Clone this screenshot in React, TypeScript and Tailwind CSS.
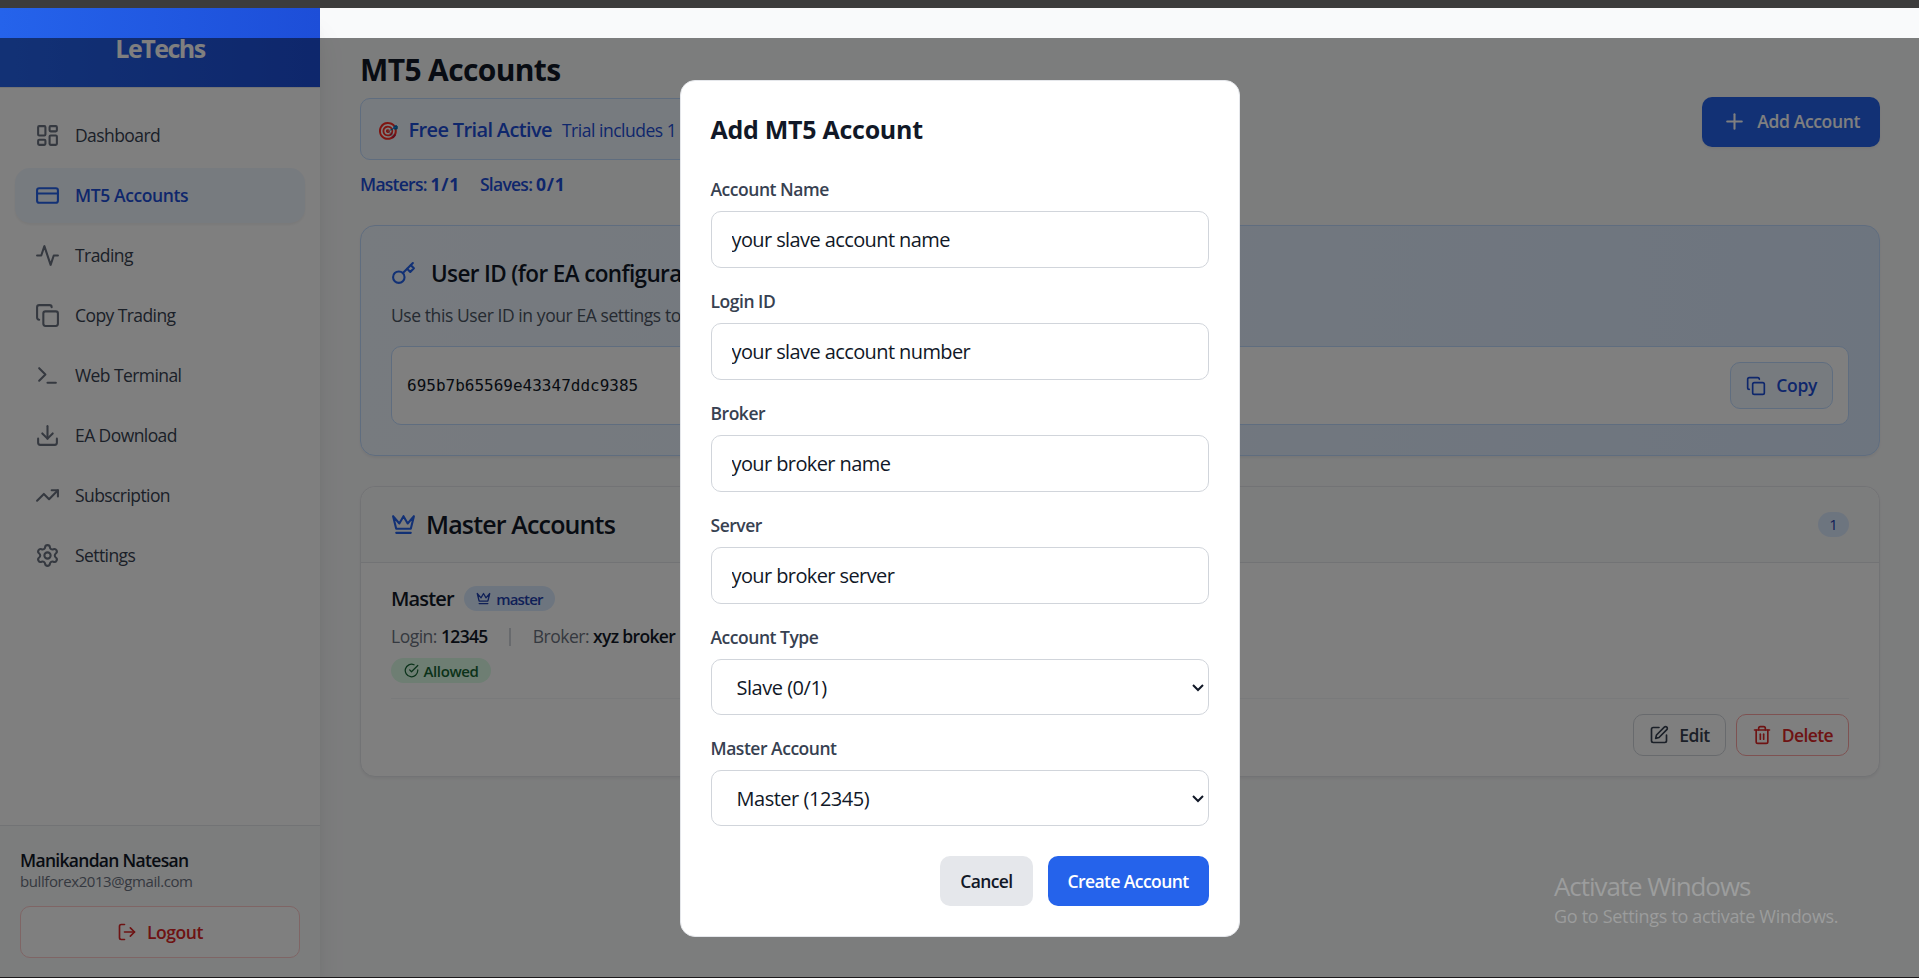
import React from 'react';
import {
  LayoutDashboard,
  CreditCard,
  Copy,
  Download,
  TrendingUp,
  Settings,
  LogOut,
  Plus,
  Trash2,
} from 'lucide-react';

type IconProps = { className?: string };

function Svg({ className, children }: IconProps & { children: React.ReactNode }) {
  return (
    <svg
      viewBox="0 0 24 24"
      fill="none"
      stroke="currentColor"
      strokeWidth={2}
      strokeLinecap="round"
      strokeLinejoin="round"
      className={className}
    >
      {children}
    </svg>
  );
}

const ActivityIcon = ({ className }: IconProps) => (
  <Svg className={className}>
    <polyline points="22 12 18 12 15 21 9 3 6 12 2 12" />
  </Svg>
);

const TerminalIcon = ({ className }: IconProps) => (
  <Svg className={className}>
    <polyline points="4 17 10 11 4 5" />
    <line x1="12" x2="20" y1="19" y2="19" />
  </Svg>
);

const CrownIcon = ({ className }: IconProps) => (
  <Svg className={className}>
    <path d="m2 4 3 12h14l3-12-6 7-4-7-4 7-6-7zm3 16h14" />
  </Svg>
);

const KeyIcon = ({ className }: IconProps) => (
  <Svg className={className}>
    <circle cx="7.5" cy="15.5" r="5.5" />
    <path d="m21 2-9.6 9.6" />
    <path d="m15.5 7.5 3 3L22 7l-3-3" />
  </Svg>
);

const CheckIcon = ({ className }: IconProps) => (
  <Svg className={className}>
    <path d="M22 11.08V12a10 10 0 1 1-5.93-9.14" />
    <path d="m9 11 3 3L22 4" />
  </Svg>
);

const EditIcon = ({ className }: IconProps) => (
  <Svg className={className}>
    <path d="M12 3H5a2 2 0 0 0-2 2v14a2 2 0 0 0 2 2h14a2 2 0 0 0 2-2v-7" />
    <path d="M18.375 2.625a2.121 2.121 0 1 1 3 3L12 15l-4 1 1-4Z" />
  </Svg>
);

// Text that sits beside an icon, set slightly low in its 20px line
function Label({ children }: { children: React.ReactNode }) {
  return <span className="pt-px leading-[19px]">{children}</span>;
}

const navigation = [
  { name: 'Dashboard', icon: LayoutDashboard },
  { name: 'MT5 Accounts', icon: CreditCard, active: true },
  { name: 'Trading', icon: ActivityIcon },
  { name: 'Copy Trading', icon: Copy },
  { name: 'Web Terminal', icon: TerminalIcon },
  { name: 'EA Download', icon: Download },
  { name: 'Subscription', icon: TrendingUp },
  { name: 'Settings', icon: Settings },
];

function Sidebar() {
  return (
    <aside className="relative z-10 flex w-64 shrink-0 flex-col bg-white shadow-xl">
      <div className="flex h-16 items-center justify-center border-b border-[#e5e7eb] bg-linear-to-r from-[#2563eb] to-[#1d4ed8]">
        <h1 className="pt-0.5 text-xl font-bold tracking-[-0.06em] text-white">LeTechs</h1>
      </div>
      <nav className="flex-1 space-y-1 px-3 py-4">
        {navigation.map((item) => (
          <a
            key={item.name}
            className={
              item.active
                ? 'flex items-center rounded-xl bg-[#eff6ff] px-4 py-3 text-sm font-semibold tracking-[-0.022em] text-[#1d4ed8] shadow-xs'
                : 'flex items-center rounded-xl px-4 py-3 text-sm tracking-[-0.033em] text-[#374151]'
            }
          >
            <item.icon className={item.active ? 'mr-3 h-5 w-5 text-[#2563eb]' : 'mr-3 h-5 w-5 text-[#6b7280]'} />
            <Label>{item.name}</Label>
          </a>
        ))}
      </nav>
      <div className="border-t border-[#e5e7eb] bg-[#f9fafb] p-4">
        <p className="pt-0.5 text-sm leading-[18px] font-semibold tracking-[-0.04em] text-[#111827]">Manikandan Natesan</p>
        <p className="mb-3 text-xs tracking-[-0.028em] text-[#6b7280]">bullforex2013@gmail.com</p>
        <button className="flex w-full items-center justify-center rounded-lg border border-[#fecaca] bg-white py-2.5 text-sm font-semibold tracking-[-0.025em] text-[#dc2626]">
          <LogOut className="mr-2 h-4 w-4" />
          <Label>Logout</Label>
        </button>
      </div>
    </aside>
  );
}

function PageHeader() {
  return (
    <div className="mb-6 flex items-center justify-between">
      <div>
        <h1 className="pt-0.5 text-2xl leading-[30px] font-bold tracking-[-0.021em] text-[#111827]">MT5 Accounts</h1>
        <div className="mt-2 flex h-[49.6px] w-[400px] items-center rounded-lg border border-[#bfdbfe] bg-[#eff6ff] px-3 pt-0.5">
          <span className="w-[26px] pl-px text-[14px]">🎯</span>
          <span className="font-semibold tracking-[-0.032em] text-[#1d4ed8]">Free Trial Active</span>
          <span className="ml-2 text-sm tracking-[-0.027em] text-[#1d4ed8]">Trial includes 1</span>
        </div>
        <div className="mt-2.5 flex gap-4 text-sm leading-[18px] font-semibold tracking-[-0.042em] text-[#1d4ed8]">
          <span>
            Masters: <span className="font-bold tracking-[0.04em]">1/1</span>
          </span>
          <span>
            Slaves: <span className="font-bold tracking-[0.04em]">0/1</span>
          </span>
        </div>
      </div>
      <button className="flex h-10 items-center rounded-lg bg-[#2563eb] px-4 text-sm font-semibold tracking-[-0.02em] text-white shadow-xs">
        <Plus className="mr-2 h-5 w-5" />
        <Label>Add Account</Label>
      </button>
    </div>
  );
}

function UserIdCard() {
  return (
    <div className="mb-6 rounded-xl border border-[#bfdbfe] bg-linear-to-r from-[#eff6ff] to-[#dbeafe] p-6 shadow-xs">
      <h2 className="flex items-center text-lg font-semibold tracking-[-0.028em] text-[#111827]">
        <KeyIcon className="mr-3 h-5 w-5 text-[#2563eb]" />
        <span className="pt-px leading-[27px]">User ID (for EA configuration)</span>
      </h2>
      <p className="mt-2.5 text-sm leading-[18px] tracking-[-0.024em] text-[#4b5563]">
        Use this User ID in your EA settings to
      </p>
      <div className="mt-4 flex items-center justify-between rounded-lg border border-[#bfdbfe] bg-white p-3">
        <code className="font-['DejaVu_Sans_Mono',monospace] text-[12.8px] text-[#111827]">695b7b65569e43347ddc9385</code>
        <button className="flex items-center rounded-lg border border-[#bfdbfe] bg-[#eff6ff] px-3 py-2 text-sm font-semibold tracking-[-0.02em] text-[#1d4ed8]">
          <Copy className="mr-2 h-4 w-4" />
          <Label>Copy</Label>
        </button>
      </div>
    </div>
  );
}

function MasterAccounts() {
  return (
    <div className="rounded-xl border border-[#e5e7eb] bg-white shadow-xs">
      <div className="flex items-center justify-between rounded-t-xl border-b border-[#e5e7eb] bg-[#f9fafb] px-6 py-4">
        <h2 className="flex items-center text-xl font-semibold tracking-[-0.034em] text-[#111827]">
          <CrownIcon className="mr-2 h-5 w-5 text-[#2563eb]" />
          <span className="pt-px leading-[27px]">Master Accounts</span>
        </h2>
        <span className="rounded-full bg-[#dbeafe] px-[9px] text-xs leading-5 text-[#1e40af]">1</span>
      </div>
      <div className="px-6 pt-[16.5px] pb-4">
        <div className="flex items-center">
          <h3 className="font-semibold tracking-[-0.043em] text-[#111827]">Master</h3>
          <span className="ml-2 flex h-5 items-center rounded-full bg-[#dbeafe] px-2.5 text-xs font-semibold tracking-[-0.055em] text-[#1e40af]">
            <CrownIcon className="mr-1 h-3 w-3" />
            master
          </span>
        </div>
        <div className="mt-[8.5px] flex items-center text-sm tracking-[-0.028em] text-[#6b7280]">
          <span>
            Login: <span className="font-semibold tracking-[-0.04em] text-[#111827]">12345</span>
          </span>
          <span className="mr-[17px] ml-[17.5px] h-3.5 w-[1.6px] bg-[#d1d5db]" />
          <span>
            Broker: <span className="font-semibold tracking-[-0.038em] text-[#111827]">xyz broker</span>
          </span>
        </div>
        <div className="mt-[7.2px] mb-[11.8px] flex">
          <span className="flex h-5 items-center rounded-full bg-[#dcfce7] px-2.5 text-xs font-semibold tracking-[-0.025em] text-[#166534]">
            <CheckIcon className="mr-1 h-3 w-3" />
            Allowed
          </span>
        </div>
        <div className="flex justify-end gap-2 border-t border-[#f3f4f6] pt-3">
          <button className="flex items-center rounded-lg border border-[#d1d5db] px-3 py-1.5 text-sm font-semibold tracking-[-0.03em] text-[#374151]">
            <EditIcon className="mr-2 h-4 w-4" />
            <Label>Edit</Label>
          </button>
          <button className="flex items-center rounded-lg border border-[#fca5a5] px-3 py-1.5 text-sm font-semibold tracking-[-0.034em] text-[#dc2626]">
            <Trash2 className="mr-2 h-4 w-4" />
            <Label>Delete</Label>
          </button>
        </div>
      </div>
    </div>
  );
}

const fields = [
  { label: 'Account Name', value: 'your slave account name' },
  { label: 'Login ID', value: 'your slave account number' },
  { label: 'Broker', value: 'your broker name' },
  { label: 'Server', value: 'your broker server' },
];

const selects = [
  { label: 'Account Type', value: 'Slave (0/1)' },
  { label: 'Master Account', value: 'Master (12345)' },
];

function FieldLabel({ children }: { children: React.ReactNode }) {
  return (
    <label className="mb-[7px] block pt-px text-sm font-semibold tracking-[-0.027em] text-[#374151]">{children}</label>
  );
}

function AddAccountModal() {
  return (
    <div className="absolute inset-x-0 top-6 bottom-0 z-20 flex items-center justify-center bg-black/50 pt-px">
      <div className="w-full max-w-md rounded-xl border border-[#e5e7eb] bg-white p-6">
        <h2 className="mb-[23px] pt-px text-xl font-bold tracking-[-0.011em] text-[#111827]">Add MT5 Account</h2>
        <form className="space-y-4">
          {fields.map((field) => (
            <div key={field.label}>
              <FieldLabel>{field.label}</FieldLabel>
              <input
                defaultValue={field.value}
                className="block w-full rounded-lg border border-[#d1d5db] px-4 py-2.5 tracking-[-0.03em] text-[#111827]"
              />
            </div>
          ))}
          {selects.map((field) => (
            <div key={field.label}>
              <FieldLabel>{field.label}</FieldLabel>
              <select className="block h-[44.8px] w-full rounded-lg border border-[#d1d5db] bg-white px-4 tracking-[-0.024em] text-[#111827]">
                <option>{field.value}</option>
              </select>
            </div>
          ))}
          <div className="flex justify-end gap-3 pt-2">
            <button type="button" className="h-10 rounded-lg bg-[#e5e7eb] px-4 text-sm font-semibold tracking-[-0.034em] text-[#111827]">
              Cancel
            </button>
            <button type="button" className="h-10 rounded-lg bg-[#2563eb] px-4 text-sm font-semibold tracking-[-0.034em] text-white">
              Create Account
            </button>
          </div>
        </form>
      </div>
    </div>
  );
}

export default function App() {
  return (
    <div className="relative flex h-[978px] flex-col overflow-hidden bg-[#3c3c3c] pt-2 font-['Open_Sans','Noto_Sans',sans-serif]">
      <div className="relative flex min-h-0 flex-1 bg-[#f9fafb] [zoom:1.25]">
        <Sidebar />
        <main className="flex-1 py-8 pr-[31.2px] pl-8">
          <PageHeader />
          <UserIdCard />
          <MasterAccounts />
        </main>
        <AddAccountModal />
      </div>
      <div className="absolute right-[80px] bottom-[49px] z-30 w-[285px] text-white/25">
        <p className="text-[26px] leading-[34px] tracking-[-0.041em]">Activate Windows</p>
        <p className="text-[18px] leading-[26px] tracking-[-0.017em]">Go to Settings to activate Windows.</p>
      </div>
      <div className="absolute inset-x-0 bottom-0 z-30 h-px bg-[#1c1a1c]" />
    </div>
  );
}
